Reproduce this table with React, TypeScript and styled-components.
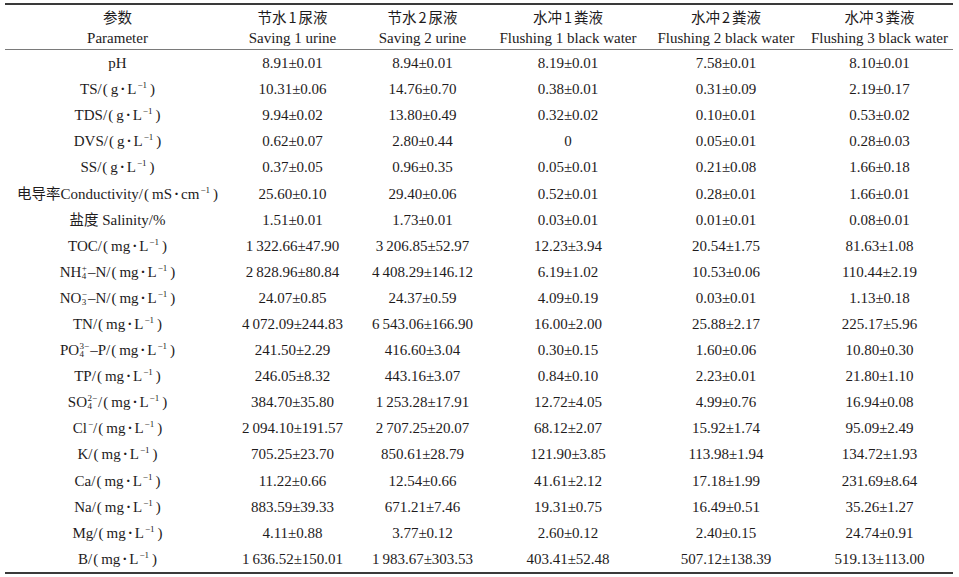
import React from 'react';
import styled, { createGlobalStyle } from 'styled-components';

const GlobalStyle = createGlobalStyle`
  html, body {
    margin: 0;
    padding: 0;
    background: #ffffff;
  }
  body {
    font-family: "Liberation Serif", "Noto Sans CJK SC", serif;
    color: #1e1b1c;
  }
`;

const Page = styled.div`
  width: 959px;
  height: 577px;
  padding: 3px 6px 0 5px;
  box-sizing: border-box;
  background: #fff;
`;

const Table = styled.table`
  width: 948px;
  table-layout: fixed;
  border-collapse: separate;
  border-spacing: 0;
  border-top: 2px solid #3a3a3a;
  border-bottom: 2px solid #3a3a3a;
  font-size: 15px;
`;

const HeadCell = styled.th`
  font-weight: normal;
  text-align: center;
  line-height: 20px;
  padding: 2px 0 1px;
  border-bottom: 1.5px solid #7a7a7a;
  white-space: nowrap;
`;

const Cell = styled.td`
  height: 26.1px;
  padding: 0;
  text-align: center;
  vertical-align: middle;
  white-space: nowrap;
  line-height: 20px;
`;

const Cjk = styled.span`
  font-family: "Noto Sans CJK SC", sans-serif;
  font-size: 14.5px;
`;

const Num = styled.span<{ $gap?: boolean }>`
  margin: 0 ${(p) => (p.$gap ? '2px' : '0')};
`;

const Sup = styled.sup`
  font-size: 9px;
  vertical-align: 6px;
  line-height: 0;
  margin-left: 1px;
`;

const Stack = styled.span`
  display: inline-flex;
  flex-direction: column;
  align-items: flex-start;
  vertical-align: 6px;
  font-size: 9px;
  line-height: 8px;
  margin: 0 1px 0 0.5px;
`;

const Dot = styled.span`
  margin: 0 2px;
  font-weight: bold;
`;

const Paren = styled.span<{ $close?: boolean }>`
  margin: ${(p) => (p.$close ? '0 0 0 3px' : '0 3px 0 1px')};
`;

const Unit = ({ a, b }: { a: string; b: string }) => (
  <>
    /<Paren>(</Paren>
    {a}
    <Dot>·</Dot>
    {b}
    <Sup>−1</Sup>
    <Paren $close>)</Paren>
  </>
);

const Ion = ({ sub, sup }: { sub: string; sup: string }) => (
  <Stack>
    <span>{sup}</span>
    <span>{sub}</span>
  </Stack>
);

const cols = [225, 125, 135, 156, 160, 147];

const heads: [React.ReactNode, string][] = [
  [<Cjk>参数</Cjk>, 'Parameter'],
  [<Cjk>节水<Num $gap>1</Num>尿液</Cjk>, 'Saving 1 urine'],
  [<Cjk>节水<Num $gap>2</Num>尿液</Cjk>, 'Saving 2 urine'],
  [<Cjk>水冲<Num $gap>1</Num>粪液</Cjk>, 'Flushing 1 black water'],
  [<Cjk>水冲<Num $gap>2</Num>粪液</Cjk>, 'Flushing 2 black water'],
  [<Cjk>水冲<Num $gap>3</Num>粪液</Cjk>, 'Flushing 3 black water'],
];

const rows: [React.ReactNode, string[]][] = [
  ['pH', ['8.91±0.01', '8.94±0.01', '8.19±0.01', '7.58±0.01', '8.10±0.01']],
  [<>TS<Unit a="g" b="L" /></>, ['10.31±0.06', '14.76±0.70', '0.38±0.01', '0.31±0.09', '2.19±0.17']],
  [<>TDS<Unit a="g" b="L" /></>, ['9.94±0.02', '13.80±0.49', '0.32±0.02', '0.10±0.01', '0.53±0.02']],
  [<>DVS<Unit a="g" b="L" /></>, ['0.62±0.07', '2.80±0.44', '0', '0.05±0.01', '0.28±0.03']],
  [<>SS<Unit a="g" b="L" /></>, ['0.37±0.05', '0.96±0.35', '0.05±0.01', '0.21±0.08', '1.66±0.18']],
  [<><Cjk>电导率</Cjk>Conductivity<Unit a="mS" b="cm" /></>, ['25.60±0.10', '29.40±0.06', '0.52±0.01', '0.28±0.01', '1.66±0.01']],
  [<><Cjk>盐度</Cjk> Salinity/%</>, ['1.51±0.01', '1.73±0.01', '0.03±0.01', '0.01±0.01', '0.08±0.01']],
  [<>TOC<Unit a="mg" b="L" /></>, ['1 322.66±47.90', '3 206.85±52.97', '12.23±3.94', '20.54±1.75', '81.63±1.08']],
  [<>NH<Ion sub="4" sup="+" />–N<Unit a="mg" b="L" /></>, ['2 828.96±80.84', '4 408.29±146.12', '6.19±1.02', '10.53±0.06', '110.44±2.19']],
  [<>NO<Ion sub="3" sup="−" />–N<Unit a="mg" b="L" /></>, ['24.07±0.85', '24.37±0.59', '4.09±0.19', '0.03±0.01', '1.13±0.18']],
  [<>TN<Unit a="mg" b="L" /></>, ['4 072.09±244.83', '6 543.06±166.90', '16.00±2.00', '25.88±2.17', '225.17±5.96']],
  [<>PO<Ion sub="4" sup="3−" />–P<Unit a="mg" b="L" /></>, ['241.50±2.29', '416.60±3.04', '0.30±0.15', '1.60±0.06', '10.80±0.30']],
  [<>TP<Unit a="mg" b="L" /></>, ['246.05±8.32', '443.16±3.07', '0.84±0.10', '2.23±0.01', '21.80±1.10']],
  [<>SO<Ion sub="4" sup="2−" /><Unit a="mg" b="L" /></>, ['384.70±35.80', '1 253.28±17.91', '12.72±4.05', '4.99±0.76', '16.94±0.08']],
  [<>Cl<Sup>−</Sup><Unit a="mg" b="L" /></>, ['2 094.10±191.57', '2 707.25±20.07', '68.12±2.07', '15.92±1.74', '95.09±2.49']],
  [<>K<Unit a="mg" b="L" /></>, ['705.25±23.70', '850.61±28.79', '121.90±3.85', '113.98±1.94', '134.72±1.93']],
  [<>Ca<Unit a="mg" b="L" /></>, ['11.22±0.66', '12.54±0.66', '41.61±2.12', '17.18±1.99', '231.69±8.64']],
  [<>Na<Unit a="mg" b="L" /></>, ['883.59±39.33', '671.21±7.46', '19.31±0.75', '16.49±0.51', '35.26±1.27']],
  [<>Mg<Unit a="mg" b="L" /></>, ['4.11±0.88', '3.77±0.12', '2.60±0.12', '2.40±0.15', '24.74±0.91']],
  [<>B<Unit a="mg" b="L" /></>, ['1 636.52±150.01', '1 983.67±303.53', '403.41±52.48', '507.12±138.39', '519.13±113.00']],
];

const App = () => {
  return (
    <Page>
      <GlobalStyle />
      <Table>
        <colgroup>
          {cols.map((w, i) => (
            <col key={i} style={{ width: w }} />
          ))}
        </colgroup>
        <thead>
          <tr>
            {heads.map(([zh, en], i) => (
              <HeadCell key={i}>
                {zh}
                <br />
                {en}
              </HeadCell>
            ))}
          </tr>
        </thead>
        <tbody>
          {rows.map(([label, vals], i) => (
            <tr key={i}>
              <Cell>{label}</Cell>
              {vals.map((v, j) => (
                <Cell key={j}>{v.replace(' ', '\u2009')}</Cell>
              ))}
            </tr>
          ))}
        </tbody>
      </Table>
    </Page>
  );
};

export default App;
